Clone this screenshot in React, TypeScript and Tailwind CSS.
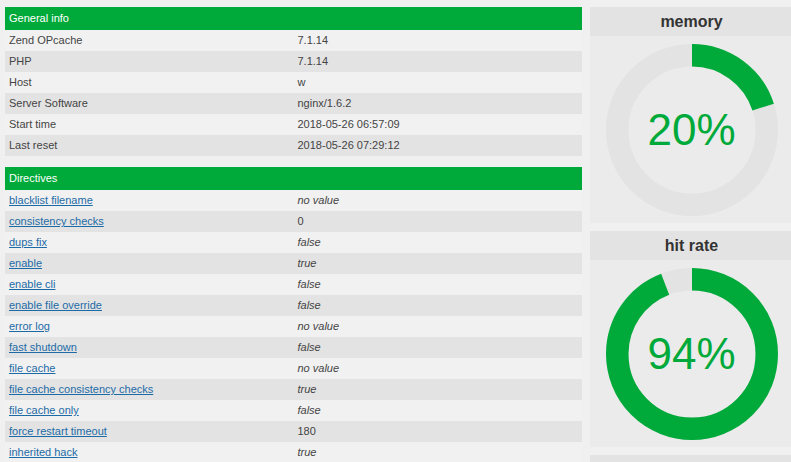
const general: [string, string][] = [
  ["Zend OPcache", "7.1.14"],
  ["PHP", "7.1.14"],
  ["Host", "w"],
  ["Server Software", "nginx/1.6.2"],
  ["Start time", "2018-05-26 06:57:09"],
  ["Last reset", "2018-05-26 07:29:12"],
];

// value, italic?
const directives: [string, string, boolean][] = [
  ["blacklist filename", "no value", true],
  ["consistency checks", "0", false],
  ["dups fix", "false", true],
  ["enable", "true", true],
  ["enable cli", "false", true],
  ["enable file override", "false", true],
  ["error log", "no value", true],
  ["fast shutdown", "false", true],
  ["file cache", "no value", true],
  ["file cache consistency checks", "true", true],
  ["file cache only", "false", true],
  ["force restart timeout", "180", false],
  ["inherited hack", "true", true],
  ["interned strings buffer", "8", false],
  ["load comments", "true", true],
];

const GREEN = "#00aa3a";

function Donut({ label, percent }: { label: string; percent: number }) {
  const r = 74.75;
  const circ = 2 * Math.PI * r;
  return (
    <div className="flex flex-col">
      <div className="h-[29px] bg-[#e3e3e3] flex items-center justify-center text-[16px] font-bold text-[#333]">
        {label}
      </div>
      <div className="h-[187px] bg-[#ebebeb] flex items-center justify-center">
        <div className="relative w-[172px] h-[172px]">
          <svg width="172" height="172" viewBox="0 0 172 172">
            <circle cx="86" cy="86" r={r} fill="none" stroke="#e3e3e3" strokeWidth="22.5" />
            <circle
              cx="86"
              cy="86"
              r={r}
              fill="none"
              stroke={GREEN}
              strokeWidth="22.5"
              strokeDasharray={`${(circ * percent) / 100} ${circ}`}
              transform="rotate(-90 86 86)"
            />
          </svg>
          <div className="absolute inset-0 flex items-center justify-center text-[44px] leading-none text-[#00aa3a]">
            {percent}%
          </div>
        </div>
      </div>
    </div>
  );
}

export default function App() {
  return (
    <div
      className="w-screen h-screen overflow-hidden bg-[#f0f0f0] text-[#444] text-[11px]"
      style={{ fontFamily: '"Liberation Sans", Arial, sans-serif' }}
    >
      <div className="flex gap-[8px] pl-[5px] pt-[7px] w-[810px]">
        <div className="w-[577px] shrink-0">
          <table className="w-full border-collapse table-fixed mb-[11px]">
            <thead>
              <tr>
                <th colSpan={2} className="h-[23px] bg-[#00aa3a] text-white font-normal text-left px-[4px]">
                  General info
                </th>
              </tr>
            </thead>
            <tbody>
              {general.map(([k, v], i) => (
                <tr key={k} className={i % 2 ? "bg-[#e3e3e3]" : "bg-[#f1f1f1]"}>
                  <td className="h-[21px] px-[4px] w-1/2">{k}</td>
                  <td className="h-[21px] px-[4px] w-1/2">{v}</td>
                </tr>
              ))}
            </tbody>
          </table>
          <table className="w-full border-collapse table-fixed">
            <thead>
              <tr>
                <th colSpan={2} className="h-[23px] bg-[#00aa3a] text-white font-normal text-left px-[4px]">
                  Directives
                </th>
              </tr>
            </thead>
            <tbody>
              {directives.map(([k, v, it], i) => (
                <tr key={k} className={i % 2 ? "bg-[#e3e3e3]" : "bg-[#f1f1f1]"}>
                  <td className="h-[21px] px-[4px] w-1/2">
                    <a href="#" className="text-[#1d6ba6] underline">
                      {k}
                    </a>
                  </td>
                  <td className={`h-[21px] px-[4px] w-1/2 ${it ? "italic" : ""}`}>{v}</td>
                </tr>
              ))}
            </tbody>
          </table>
        </div>
        <div className="w-[203px] shrink-0 flex flex-col gap-[8px]">
          <Donut label="memory" percent={20} />
          <Donut label="hit rate" percent={94} />
          <Donut label="keys" percent={3} />
        </div>
      </div>
    </div>
  );
}
